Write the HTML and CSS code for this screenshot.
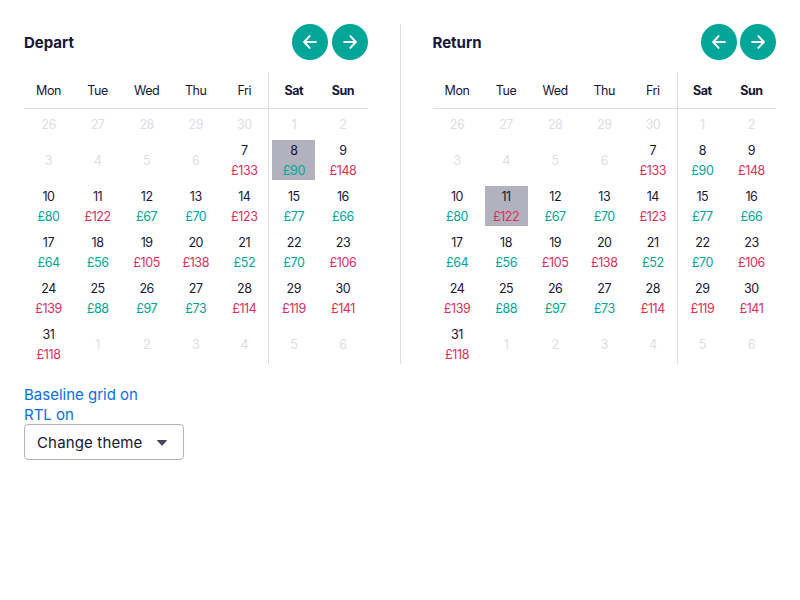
FILE: index.html
```html
<!DOCTYPE html>
<html lang="en">

<head>
  <meta charset="utf-8">
  <title>Price calendar</title>
  <meta name="viewport" content="width=device-width, initial-scale=1.0">
  <link rel="stylesheet" href="styles.css">
</head>

<body>
  <div class="calendars">
    <div class="calendar">
      <div class="cal-header">
        <h2>Depart</h2>
        <div class="cal-nav">
          <button class="nav-btn" aria-label="Previous month">
            <svg viewBox="0 0 24 24"><path d="M19 12H5.5M11.5 5 5 12l6.500 7"/></svg>
          </button>
          <button class="nav-btn" aria-label="Next month">
            <svg viewBox="0 0 24 24"><path d="M5 12h13.500M12.500 5l6.500 7-6.500 7"/></svg>
          </button>
        </div>
      </div>
      <div class="cal-grid">
        <div class="dow">Mon</div><div class="dow">Tue</div><div class="dow">Wed</div><div class="dow">Thu</div><div class="dow">Fri</div><div class="dow weekend">Sat</div><div class="dow weekend">Sun</div>

        <div class="day off"><span>26</span></div><div class="day off"><span>27</span></div><div class="day off"><span>28</span></div><div class="day off"><span>29</span></div><div class="day off"><span>30</span></div><div class="day off"><span>1</span></div><div class="day off"><span>2</span></div>

        <div class="day off"><span>3</span></div><div class="day off"><span>4</span></div><div class="day off"><span>5</span></div><div class="day off"><span>6</span></div>
        <div class="day"><span>7</span><span class="high">£133</span></div>
        <div class="day selected"><span>8</span><span class="low">£90</span></div>
        <div class="day"><span>9</span><span class="high">£148</span></div>

        <div class="day"><span>10</span><span class="low">£80</span></div>
        <div class="day"><span>11</span><span class="high">£122</span></div>
        <div class="day"><span>12</span><span class="low">£67</span></div>
        <div class="day"><span>13</span><span class="low">£70</span></div>
        <div class="day"><span>14</span><span class="high">£123</span></div>
        <div class="day"><span>15</span><span class="low">£77</span></div>
        <div class="day"><span>16</span><span class="low">£66</span></div>

        <div class="day"><span>17</span><span class="low">£64</span></div>
        <div class="day"><span>18</span><span class="low">£56</span></div>
        <div class="day"><span>19</span><span class="high">£105</span></div>
        <div class="day"><span>20</span><span class="high">£138</span></div>
        <div class="day"><span>21</span><span class="low">£52</span></div>
        <div class="day"><span>22</span><span class="low">£70</span></div>
        <div class="day"><span>23</span><span class="high">£106</span></div>

        <div class="day"><span>24</span><span class="high">£139</span></div>
        <div class="day"><span>25</span><span class="low">£88</span></div>
        <div class="day"><span>26</span><span class="low">£97</span></div>
        <div class="day"><span>27</span><span class="low">£73</span></div>
        <div class="day"><span>28</span><span class="high">£114</span></div>
        <div class="day"><span>29</span><span class="high">£119</span></div>
        <div class="day"><span>30</span><span class="high">£141</span></div>

        <div class="day"><span>31</span><span class="high">£118</span></div>
        <div class="day off"><span>1</span></div><div class="day off"><span>2</span></div><div class="day off"><span>3</span></div><div class="day off"><span>4</span></div><div class="day off"><span>5</span></div><div class="day off"><span>6</span></div>
      </div>
    </div>

    <div class="cal-divider"></div>

    <div class="calendar">
      <div class="cal-header">
        <h2>Return</h2>
        <div class="cal-nav">
          <button class="nav-btn" aria-label="Previous month">
            <svg viewBox="0 0 24 24"><path d="M19 12H5.5M11.5 5 5 12l6.500 7"/></svg>
          </button>
          <button class="nav-btn" aria-label="Next month">
            <svg viewBox="0 0 24 24"><path d="M5 12h13.500M12.500 5l6.500 7-6.500 7"/></svg>
          </button>
        </div>
      </div>
      <div class="cal-grid">
        <div class="dow">Mon</div><div class="dow">Tue</div><div class="dow">Wed</div><div class="dow">Thu</div><div class="dow">Fri</div><div class="dow weekend">Sat</div><div class="dow weekend">Sun</div>

        <div class="day off"><span>26</span></div><div class="day off"><span>27</span></div><div class="day off"><span>28</span></div><div class="day off"><span>29</span></div><div class="day off"><span>30</span></div><div class="day off"><span>1</span></div><div class="day off"><span>2</span></div>

        <div class="day off"><span>3</span></div><div class="day off"><span>4</span></div><div class="day off"><span>5</span></div><div class="day off"><span>6</span></div>
        <div class="day"><span>7</span><span class="high">£133</span></div>
        <div class="day"><span>8</span><span class="low">£90</span></div>
        <div class="day"><span>9</span><span class="high">£148</span></div>

        <div class="day"><span>10</span><span class="low">£80</span></div>
        <div class="day selected"><span>11</span><span class="high">£122</span></div>
        <div class="day"><span>12</span><span class="low">£67</span></div>
        <div class="day"><span>13</span><span class="low">£70</span></div>
        <div class="day"><span>14</span><span class="high">£123</span></div>
        <div class="day"><span>15</span><span class="low">£77</span></div>
        <div class="day"><span>16</span><span class="low">£66</span></div>

        <div class="day"><span>17</span><span class="low">£64</span></div>
        <div class="day"><span>18</span><span class="low">£56</span></div>
        <div class="day"><span>19</span><span class="high">£105</span></div>
        <div class="day"><span>20</span><span class="high">£138</span></div>
        <div class="day"><span>21</span><span class="low">£52</span></div>
        <div class="day"><span>22</span><span class="low">£70</span></div>
        <div class="day"><span>23</span><span class="high">£106</span></div>

        <div class="day"><span>24</span><span class="high">£139</span></div>
        <div class="day"><span>25</span><span class="low">£88</span></div>
        <div class="day"><span>26</span><span class="low">£97</span></div>
        <div class="day"><span>27</span><span class="low">£73</span></div>
        <div class="day"><span>28</span><span class="high">£114</span></div>
        <div class="day"><span>29</span><span class="high">£119</span></div>
        <div class="day"><span>30</span><span class="high">£141</span></div>

        <div class="day"><span>31</span><span class="high">£118</span></div>
        <div class="day off"><span>1</span></div><div class="day off"><span>2</span></div><div class="day off"><span>3</span></div><div class="day off"><span>4</span></div><div class="day off"><span>5</span></div><div class="day off"><span>6</span></div>
      </div>
    </div>
  </div>

  <div class="toggles">
    <a href="#">Baseline grid on</a>
    <a href="#">RTL on</a>
  </div>

  <div class="theme-select">
    <select>
      <option>Change theme</option>
    </select>
    <svg viewBox="0 0 10 6"><path d="M.5 0h9c.4 0 .6.500.3.800L5.400 5.600a.5.500 0 0 1-.8 0L.2.800C-.1.500.1 0 .5 0z"/></svg>
  </div>
</body>

</html>
```

FILE: styles.css
```css
body {
  margin: 0;
  padding: 24px;
  background-color: #ffffff;
  color: #161638;
  font-family: "Inter", "Noto Sans", sans-serif;
  font-size: 15px;
  line-height: 20px;
}

.calendars {
  display: flex;
}

.calendar {
  flex: 1;
  min-width: 0;
}

.cal-divider {
  width: 1px;
  margin: 0 32px;
  background-color: #dddde5;
}

.cal-header {
  display: flex;
  align-items: center;
  justify-content: space-between;
  height: 36px;
  margin-bottom: 12px;
}

.cal-header h2 {
  margin: 0;
  padding-top: 2px;
  font-size: 15px;
  font-weight: 700;
}

.cal-nav {
  display: flex;
  gap: 3.5px;
}

.nav-btn {
  display: flex;
  align-items: center;
  justify-content: center;
  width: 36px;
  height: 36px;
  padding: 0;
  border: 0;
  border-radius: 50%;
  background-color: #00a698;
}

.nav-btn svg {
  width: 20px;
  height: 20px;
  fill: none;
  stroke: #ffffff;
  stroke-width: 2.4;
  stroke-linecap: round;
  stroke-linejoin: round;
}

.cal-grid {
  display: grid;
  grid-template-columns: repeat(7, 1fr);
  grid-template-rows: 37px 31px repeat(4, 46px) 40px;
  font-size: 12.5px;
  letter-spacing: -0.4px;
}

.dow {
  display: flex;
  align-items: center;
  justify-content: center;
  padding-top: 2px;
  border-bottom: 1px solid #dddde5;
}

.weekend {
  font-weight: 700;
}

.day {
  display: flex;
  flex-direction: column;
  align-items: center;
  justify-content: center;
  padding-bottom: 6px;
  background-clip: content-box;
}

/* the font sits a little high in its line box */
.day span {
  margin: 1px 0 -1px;
}

/* first row of dates sits closer to the header line */
.day:nth-child(n+8):nth-child(-n+14) {
  padding-top: 5px;
}

.day:nth-last-child(-n+7) {
  padding-bottom: 0;
}

/* weekend separator runs down the whole grid */
.cal-grid > :nth-child(7n+5) {
  border-right: 1px solid #dddde5;
}

.off {
  color: #dddde5;
}

.selected {
  padding-left: 3px;
  padding-right: 3px;
  background-color: #b2b2bf;
}

.low {
  color: #00a698;
}

.high {
  color: #dc2f55;
}

.toggles {
  display: flex;
  flex-direction: column;
  margin-top: 20px;
}

.toggles a {
  margin: 1px 0 -1px;
  color: #0770e3;
  text-decoration: none;
}

.theme-select {
  position: relative;
  width: 160px;
}

.theme-select select {
  display: block;
  width: 100%;
  height: 36px;
  padding: 0 12px;
  border: 1px solid #b2b2bf;
  border-radius: 4px;
  background-color: #ffffff;
  color: #161638;
  font-family: inherit;
  font-size: 15px;
  letter-spacing: 0.15px;
  appearance: none;
}

.theme-select svg {
  position: absolute;
  top: 16px;
  right: 17px;
  width: 10px;
  height: 6px;
  fill: #444560;
}
```
